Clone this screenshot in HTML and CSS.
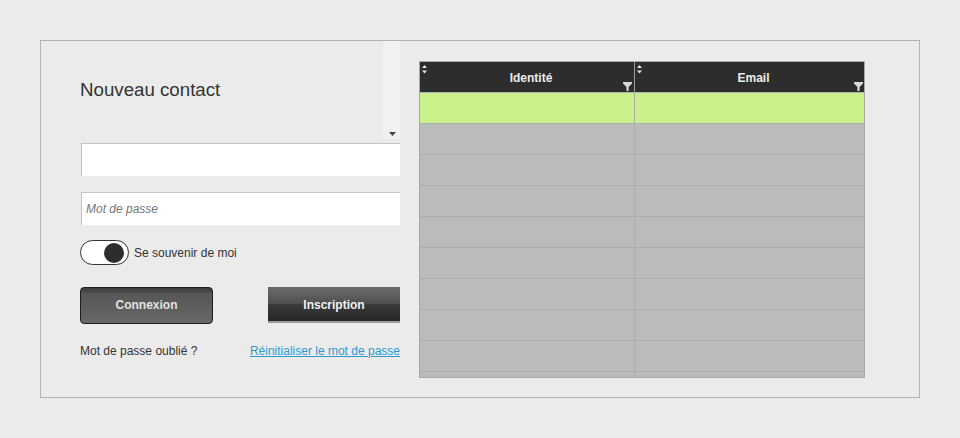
FILE: index.html
```html
<!DOCTYPE html>
<html lang="fr">
<head>
<meta charset="utf-8">
<title>Nouveau contact</title>
<link rel="stylesheet" href="styles.css">
</head>
<body>
<div class="frame">
  <div class="left">
    <div class="head">
      <h1 class="title">Nouveau contact</h1>
      <div class="strip">
        <svg class="strip-arrow" width="7" height="4" viewBox="0 0 7 4"><path d="M0 0H7L3.5 4Z" fill="#444"/></svg>
      </div>
    </div>
    <div class="field"></div>
    <div class="field field-pass"><span class="placeholder">Mot de passe</span></div>
    <div class="remember">
      <span class="toggle"><span class="knob"></span></span>
      <span class="remember-label">Se souvenir de moi</span>
    </div>
    <div class="buttons">
      <button class="btn btn-login">Connexion</button>
      <button class="btn btn-signup">Inscription</button>
    </div>
    <div class="links">
      <span class="forgot">Mot de passe oublié ?</span>
      <a class="reset" href="#">Réinitialiser le mot de passe</a>
    </div>
  </div>
  <div class="grid">
    <div class="row row-head">
      <div class="cell hcell">
        <svg class="sort" width="5" height="9" viewBox="0 0 5 9"><path d="M0 3H5L2.5 0Z M0 5.5H5L2.5 8.5Z" fill="#e6e6e6"/></svg>
        <span>Identité</span>
        <svg class="filter" width="9" height="9" viewBox="0 0 9 9"><path d="M0 0H9V1.5L5.6 5V9H3.4V5L0 1.5Z" fill="#d8d8d8"/></svg>
      </div>
      <div class="cell hcell">
        <svg class="sort" width="5" height="9" viewBox="0 0 5 9"><path d="M0 3H5L2.5 0Z M0 5.5H5L2.5 8.5Z" fill="#e6e6e6"/></svg>
        <span>Email</span>
        <svg class="filter filter-last" width="9" height="9" viewBox="0 0 9 9"><path d="M0 0H9V1.5L5.6 5V9H3.4V5L0 1.5Z" fill="#d8d8d8"/></svg>
      </div>
    </div>
    <div class="row row-sel"><div class="cell"></div><div class="cell"></div></div>
    <div class="row"><div class="cell"></div><div class="cell"></div></div>
    <div class="row"><div class="cell"></div><div class="cell"></div></div>
    <div class="row"><div class="cell"></div><div class="cell"></div></div>
    <div class="row"><div class="cell"></div><div class="cell"></div></div>
    <div class="row"><div class="cell"></div><div class="cell"></div></div>
    <div class="row"><div class="cell"></div><div class="cell"></div></div>
    <div class="row"><div class="cell"></div><div class="cell"></div></div>
    <div class="row"><div class="cell"></div><div class="cell"></div></div>
    <div class="row"><div class="cell"></div><div class="cell"></div></div>
  </div>
</div>
</body>
</html>
```

FILE: styles.css
```css
* { box-sizing: border-box; }

html, body {
  margin: 0;
  padding: 0;
  background: #ebebeb;
  font-family: "Liberation Sans", Arial, sans-serif;
  color: #333;
}

.frame {
  margin: 40px 0 0 40px;
  width: 880px;
  height: 358px;
  border: 1px solid #b3b3b3;
  display: flex;
  align-items: flex-start;
}

.left {
  width: 359px;
  padding-left: 39px;
  display: flex;
  flex-direction: column;
}

.head {
  height: 98px;
  display: flex;
}

.title {
  flex: 1;
  margin: 38px 0 0 0;
  font-size: 18.7px;
  line-height: 22px;
  font-weight: normal;
  color: #333;
}

.strip {
  width: 17px;
  height: 98px;
  background: #f1f1f1;
  display: flex;
  align-items: flex-end;
  justify-content: center;
  padding-bottom: 3px;
}

.strip-arrow { display: block; margin-left: 1px; }

.field {
  margin-top: 4px;
  margin-left: 1px;
  height: 33px;
  background: #fff;
  border-top: 1px solid #c4c4c4;
  border-left: 1px solid #c4c4c4;
  display: flex;
  align-items: center;
  padding-left: 4px;
}

.field-pass { margin-top: 16px; }

.placeholder {
  font-size: 12px;
  font-style: italic;
  color: #777;
}

.remember {
  margin-top: 15px;
  display: flex;
  align-items: center;
  height: 25px;
}

.toggle {
  width: 49px;
  height: 25px;
  border: 1.5px solid #333;
  border-radius: 13px;
  background: #fff;
  display: flex;
  align-items: center;
  justify-content: flex-end;
  padding-right: 4px;
}

.knob {
  width: 20px;
  height: 20px;
  border-radius: 50%;
  background: #2d2d2d;
}

.remember-label {
  margin-left: 5px;
  font-size: 12px;
  color: #333;
}

.buttons {
  margin-top: 22px;
  display: flex;
  justify-content: space-between;
  align-items: flex-start;
}

.btn {
  font-family: "Liberation Sans", Arial, sans-serif;
  font-size: 12px;
  font-weight: bold;
  padding: 0;
  cursor: pointer;
}

.btn-login {
  width: 133px;
  height: 37px;
  border: 1px solid #1e1e1e;
  border-radius: 4px;
  padding-bottom: 2px;
  background: linear-gradient(#3a3a3a 0%, #575757 18%, #5f5f5f 60%, #676767 100%);
  color: #e2e2e2;
}

.btn-signup {
  width: 132px;
  height: 36px;
  border: none;
  border-bottom: 2px solid #9c9c9c;
  border-radius: 0;
  padding-top: 2px;
  background: linear-gradient(#6b6b6b 0%, #505050 48%, #3a3a3a 52%, #262626 100%);
  color: #f2f2f2;
}

.links {
  margin-top: 20px;
  display: flex;
  justify-content: space-between;
  font-size: 12px;
  line-height: 14px;
}

.forgot { color: #333; }

.reset {
  color: #2f9ad0;
  text-decoration: underline;
}

.grid {
  margin-left: 19px;
  margin-top: 20px;
  width: 446px;
  height: 317px;
  border: 1px solid #a9a9a9;
  background: #bbbbbb;
  overflow: hidden;
}

.row {
  display: grid;
  grid-template-columns: 215px 1fr;
  height: 31px;
}

.cell {
  border-right: 1px solid #adadad;
  border-bottom: 1px solid #adadad;
  position: relative;
}

.cell:last-child { border-right: none; }

.row-head { background: #2d2d2d; }

.row-head .cell {
  border-bottom-color: #b4b4b4;
  border-right-color: #9a9a9a;
}

.hcell {
  display: flex;
  align-items: center;
  justify-content: center;
  padding-left: 8px;
  padding-top: 2px;
  color: #ececec;
  font-size: 12px;
  font-weight: bold;
}

.sort {
  position: absolute;
  left: 2px;
  top: 3px;
}

.filter {
  position: absolute;
  right: 2px;
  bottom: 1px;
}

.filter-last { right: 1px; }

.row-sel { background: #caf08b; }
```
